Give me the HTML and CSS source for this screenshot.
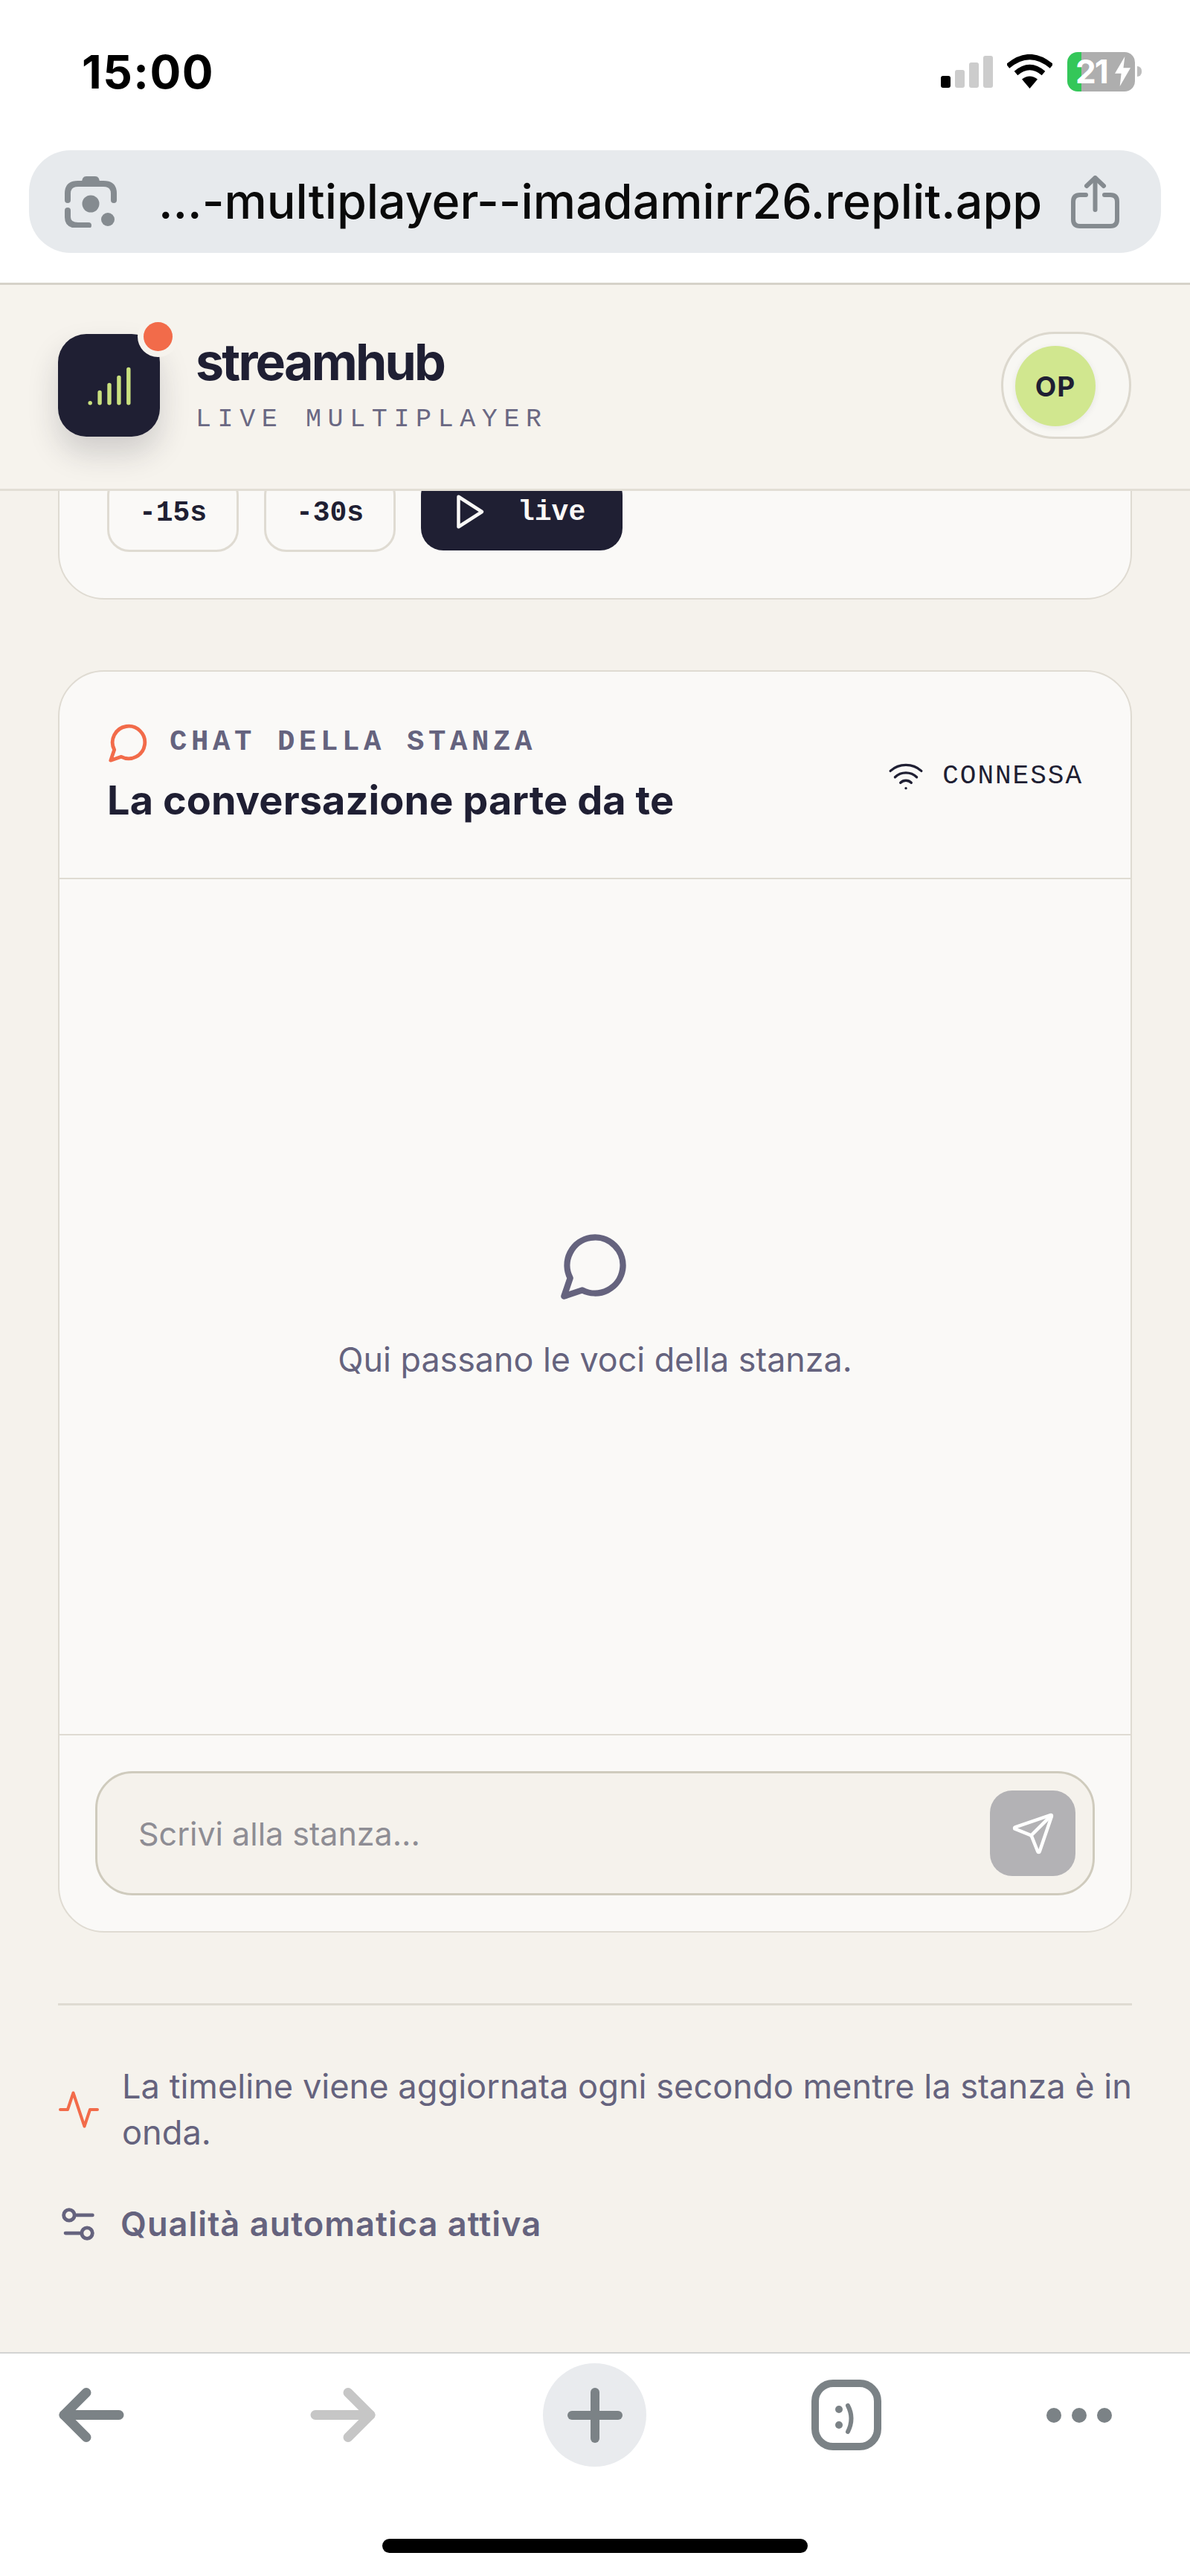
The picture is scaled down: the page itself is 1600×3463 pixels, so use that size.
FILE: index.html
```html
<!DOCTYPE html>
<html lang="it">
<head>
    <meta charset="UTF-8">
    <title>streamhub</title>
    <link rel="stylesheet" href="styles.css">
</head>
<body>
<div class="phone">

    <div class="status-bar">
        <span class="time">15:00</span>
        <div class="status-icons">
            <div class="signal">
                <i class="bar bar-1"></i>
                <i class="bar bar-2"></i>
                <i class="bar bar-3"></i>
                <i class="bar bar-4"></i>
            </div>
            <svg class="status-wifi" viewBox="0 0 61 46" fill="none" stroke="#000" stroke-width="7">
                <path d="M1 16 Q30.500 -9 60 16"/>
                <path d="M12 25.500 Q30.500 9.500 49 25.500"/>
                <path d="M30.500 46 L20 33.500 Q30.500 25.500 41 33.500 Z" fill="#000" stroke="none"/>
            </svg>
            <div class="battery">
                <span class="battery-num">21</span>
                <svg class="battery-bolt" viewBox="0 0 22 42" fill="#fff"><path d="M14 0 L0 24 H9 L7 42 L22 16 H12 Z"/></svg>
            </div>
            <i class="battery-nub"></i>
        </div>
    </div>

    <div class="url-bar">
        <svg class="lens-icon" viewBox="0 0 70 70" fill="none" stroke="#858b90" stroke-width="8" stroke-linecap="round">
            <path d="M4 33 V24 Q4 11 18 11 H52 Q66 11 66 24 V33"/>
            <path d="M23 10 Q23 1 29 1 H41 Q47 1 47 10 Z" fill="#858b90" stroke="none"/>
            <path d="M4 47 V56 Q4 67 18 67 H32"/>
            <circle cx="35" cy="38" r="11.500" fill="#858b90" stroke="none"/>
            <circle cx="58" cy="59" r="9" fill="#858b90" stroke="none"/>
        </svg>
        <span class="url-text">...-multiplayer--imadamirr26.replit.app</span>
        <svg class="share-icon" viewBox="0 0 65 71" fill="none" stroke="#858b90" stroke-width="6" stroke-linecap="round" stroke-linejoin="round">
            <path d="M20 26 H12 Q3 26 3 35 V59 Q3 68 12 68 H53 Q62 68 62 59 V35 Q62 26 53 26 H45"/>
            <path d="M32.500 46 V4"/>
            <path d="M21 14 L32.500 3 L44 14"/>
        </svg>
    </div>

    <header class="app-header">
        <div class="brand">
            <div class="logo">
                <svg class="logo-icon" viewBox="0 0 24 24" fill="none" stroke="#c9e07f" stroke-width="2.100" stroke-linecap="round">
                    <path d="M2 20h.01"/>
                    <path d="M7 20v-5.500"/>
                    <path d="M12 20v-9.400"/>
                    <path d="M17 20v-13.200"/>
                    <path d="M22 20v-17.500"/>
                </svg>
                <span class="logo-dot"></span>
            </div>
            <div class="brand-text">
                <div class="brand-name">streamhub</div>
                <div class="brand-sub">LIVE MULTIPLAYER</div>
            </div>
        </div>
        <div class="user-pill">
            <div class="avatar">OP</div>
        </div>
    </header>

    <main class="content">
        <section class="card player-card">
            <div class="seek-row">
                <button class="seek-btn">-15s</button>
                <button class="seek-btn">-30s</button>
                <button class="seek-btn live-btn">
                    <svg viewBox="0 0 24 24" fill="none" stroke="currentColor" stroke-width="2" stroke-linejoin="round"><path d="M6 3 L20 12 L6 21 Z"/></svg>
                    live
                </button>
            </div>
        </section>

        <section class="card chat-card">
            <div class="chat-head">
                <div>
                    <div class="chat-label">
                        <svg viewBox="0 0 24 24" fill="none" stroke="#f26b4a" stroke-width="2" stroke-linejoin="round"><path d="M7.900 20A9 9 0 1 0 4 16.100L2 22Z"/></svg>
                        CHAT DELLA STANZA
                    </div>
                    <h2 class="chat-title">La conversazione parte da te</h2>
                </div>
                <div class="chat-status">
                    <svg viewBox="0 0 24 24" fill="none" stroke="#1f1f33" stroke-width="1.600" stroke-linecap="round">
                        <path d="M12 20h.01"/>
                        <path d="M2 8.820a15 15 0 0 1 20 0"/>
                        <path d="M5 12.860a10 10 0 0 1 14 0"/>
                        <path d="M8.500 16.430a5 5 0 0 1 7 0"/>
                    </svg>
                    CONNESSA
                </div>
            </div>

            <div class="chat-body">
                <svg viewBox="0 0 24 24" fill="none" stroke="#65637e" stroke-width="2" stroke-linejoin="round"><path d="M7.900 20A9 9 0 1 0 4 16.100L2 22Z"/></svg>
                <p>Qui passano le voci della stanza.</p>
            </div>

            <div class="composer">
                <div class="composer-box">
                    <input type="text" placeholder="Scrivi alla stanza...">
                    <button class="send-btn">
                        <svg viewBox="0 0 24 24" fill="none" stroke="#fff" stroke-width="1.800" stroke-linejoin="round" stroke-linecap="round">
                            <path d="M14.536 21.686a.5.5 0 0 0 .937-.024l6.500-19a.496.496 0 0 0-.635-.635l-19 6.500a.5.5 0 0 0-.024.937l7.930 3.180a2 2 0 0 1 1.112 1.110z"/>
                            <path d="m21.854 2.147-10.940 10.939"/>
                        </svg>
                    </button>
                </div>
            </div>
        </section>

        <div class="notes">
            <div class="note">
                <svg class="pulse-icon" viewBox="0 0 24 24" fill="none" stroke="#f26b4a" stroke-width="1.600" stroke-linecap="round" stroke-linejoin="round"><path d="M22 12h-4l-3 9L9 3l-3 9H2"/></svg>
                <p>La timeline viene aggiornata ogni secondo mentre la stanza è in onda.</p>
            </div>
            <div class="note note-strong">
                <svg viewBox="0 0 24 24" fill="none" stroke="#65637e" stroke-width="2" stroke-linecap="round">
                    <path d="M20 7h-9"/>
                    <path d="M14 17H5"/>
                    <circle cx="17" cy="17" r="3"/>
                    <circle cx="7" cy="7" r="3"/>
                </svg>
                <p>Qualità automatica attiva</p>
            </div>
        </div>
    </main>

    <nav class="bottom-bar">
        <div class="bottom-icons">
            <svg class="nav-arrow" viewBox="0 0 88 73" fill="none" stroke="#7b8286" stroke-width="13" stroke-linecap="round" stroke-linejoin="round">
                <path d="M7 36.500 H81"/>
                <path d="M37 6.500 L7 36.500 L37 66.500"/>
            </svg>
            <svg class="nav-arrow nav-forward" viewBox="0 0 88 73" fill="none" stroke="#c6c6c6" stroke-width="13" stroke-linecap="round" stroke-linejoin="round">
                <path d="M81 36.500 H7"/>
                <path d="M51 6.500 L81 36.500 L51 66.500"/>
            </svg>
            <div class="plus-btn">
                <svg viewBox="0 0 74 74" fill="none" stroke="#7b8286" stroke-width="12" stroke-linecap="round">
                    <path d="M6 37 H68"/>
                    <path d="M37 6 V68"/>
                </svg>
            </div>
            <svg class="tabs-icon" viewBox="0 0 94 95" fill="none" stroke="#7b8286">
                <rect x="5" y="5" width="84" height="85" rx="24" stroke-width="10"/>
                <circle cx="37" cy="40" r="5" fill="#7b8286" stroke="none"/>
                <circle cx="37" cy="61" r="5" fill="#7b8286" stroke="none"/>
                <path d="M49 35 Q58 52 49 70" stroke-width="6" stroke-linecap="round"/>
            </svg>
            <div class="more-dots">
                <i></i><i></i><i></i>
            </div>
        </div>
        <div class="home-indicator"></div>
    </nav>

</div>
</body>
</html>
```

FILE: styles.css
```css
* {
    box-sizing: border-box;
}

body {
    margin: 0;
    font-family: Inter, "Liberation Sans", sans-serif;
    color: #1f1f33;
    background: #fff;
}

svg {
    display: block;
    flex: none;
}

.phone {
    width: 1600px;
    height: 3463px;
    display: flex;
    flex-direction: column;
    overflow: hidden;
}

/* ios status bar */
.status-bar {
    height: 192px;
    flex: none;
    display: flex;
    align-items: center;
    justify-content: space-between;
    padding: 0 65px 0 110px;
}

.time {
    font-size: 62px;
    font-weight: 700;
    color: #000;
    letter-spacing: 1.500px;
}

.status-icons {
    display: flex;
    align-items: center;
}

.signal {
    display: flex;
    align-items: flex-end;
    gap: 6px;
    height: 43px;
}

.bar {
    width: 13px;
    border-radius: 3px;
    background: #ccc;
}

.bar-1 { height: 16px; background: #000; }
.bar-2 { height: 24px; }
.bar-3 { height: 34px; }
.bar-4 { height: 43px; }

.status-wifi {
    width: 61px;
    height: 46px;
    margin-left: 19px;
}

.battery {
    width: 91px;
    height: 53px;
    margin-left: 20px;
    padding-left: 11px;
    border-radius: 14px;
    background: linear-gradient(90deg, #34c759 19px, #aeaeae 19px);
    display: flex;
    align-items: center;
    gap: 10px;
}

.battery-num {
    font-size: 44px;
    font-weight: 700;
    color: #fff;
    letter-spacing: -2px;
}

.battery-bolt {
    width: 21px;
    height: 42px;
}

.battery-nub {
    width: 6px;
    height: 14px;
    margin-left: 3px;
    border-radius: 0 7px 7px 0;
    background: #bdbdbd;
}

/* browser chrome */
.url-bar {
    flex: none;
    height: 138px;
    margin: 10px 39px 40px;
    padding: 0 56px 0 48px;
    border-radius: 56px;
    background: #e7eaed;
    display: flex;
    align-items: center;
}

.lens-icon {
    width: 70px;
    height: 70px;
}

.url-text {
    flex: 1;
    margin-left: 56px;
    font-size: 64.500px;
    font-weight: 500;
    color: #0a0a0a;
    white-space: nowrap;
}

.share-icon {
    width: 65px;
    height: 71px;
}

/* app header */
.app-header {
    flex: none;
    height: 280px;
    padding: 0 79px 4px 78px;
    border-top: 3px solid #d6d2c9;
    border-bottom: 3px solid #e2ded5;
    background: #f6f3ed;
    display: flex;
    align-items: center;
    justify-content: space-between;
}

.brand {
    display: flex;
    align-items: center;
    gap: 48px;
}

.logo {
    position: relative;
    width: 137px;
    height: 138px;
    border-radius: 38px;
    background: #1f1f33;
    box-shadow: 0 22px 40px rgba(31, 31, 51, 0.18);
    display: flex;
    align-items: center;
    justify-content: center;
}

.logo-icon {
    width: 62px;
    height: 62px;
    margin-top: 6px;
}

.logo-dot {
    position: absolute;
    top: -16px;
    right: -17px;
    width: 39px;
    height: 39px;
    border-radius: 50%;
    background: #f26b4a;
    box-shadow: 0 0 0 8px #f6f3ed;
}

.brand-text {
    padding-bottom: 4px;
}

.brand-name {
    font-size: 68px;
    font-weight: 700;
    line-height: 78px;
    letter-spacing: -2.800px;
}

.brand-sub {
    margin-top: 18px;
    font-family: "Liberation Mono", monospace;
    font-size: 35px;
    line-height: 42px;
    letter-spacing: 8.600px;
    color: #6a6883;
}

.user-pill {
    width: 175px;
    height: 144px;
    padding: 16px;
    border: 3px solid #dcd8ce;
    border-radius: 72px;
    background: #f8f7f3;
}

.avatar {
    width: 108px;
    height: 108px;
    border-radius: 50%;
    background: #d1e78f;
    box-shadow: 0 2px 8px rgba(31, 31, 51, 0.08);
    display: flex;
    align-items: center;
    justify-content: center;
    font-size: 37px;
    font-weight: 700;
    letter-spacing: 1px;
}

/* scrolling page, pinned to the bottom so the first card runs under the header */
.content {
    flex: 1;
    min-height: 0;
    overflow: hidden;
    background: #f5f2ec;
    padding: 0 78px 141px;
    display: flex;
    flex-direction: column;
    justify-content: flex-end;
}

.card {
    flex: none;
    border: 2.500px solid #dfdbd2;
    border-radius: 62px;
    background: #faf9f7;
}

.player-card {
    padding: 40px 64px 62px;
    margin-bottom: 95px;
}

.seek-row {
    display: flex;
    align-items: flex-end;
    gap: 34px;
}

.seek-btn {
    width: 177px;
    height: 106px;
    border: 3px solid #dfdbd2;
    border-radius: 30px;
    background: #faf9f7;
    color: #1f1f33;
    font-family: "Liberation Mono", monospace;
    font-size: 38px;
    font-weight: 700;
    padding: 0;
}

.live-btn {
    width: 271px;
    height: 104px;
    margin-bottom: 2px;
    padding-left: 37px;
    border: none;
    background: #1f1f33;
    color: #faf9f7;
    display: flex;
    align-items: center;
    gap: 39px;
}

.live-btn svg {
    width: 54px;
    height: 54px;
}

.chat-head {
    padding: 66px 64px 71px;
    border-bottom: 2.500px solid #dfdbd2;
    display: flex;
    align-items: center;
    justify-content: space-between;
}

.chat-label {
    display: flex;
    align-items: center;
    gap: 26px;
    height: 58px;
    font-family: "Liberation Mono", monospace;
    font-size: 39px;
    font-weight: 700;
    letter-spacing: 5.600px;
    color: #65637e;
}

.chat-label svg {
    width: 58px;
    height: 58px;
}

.chat-title {
    margin: 16px 0 0;
    font-size: 54px;
    font-weight: 700;
    line-height: 66px;
    letter-spacing: 0.100px;
}

.chat-status {
    margin-top: 8px;
    display: flex;
    align-items: center;
    gap: 24px;
    font-family: "Liberation Mono", monospace;
    font-size: 36px;
    letter-spacing: 2px;
}

.chat-status svg {
    width: 50px;
    height: 50px;
}

.chat-body {
    height: 1151px;
    padding-bottom: 4px;
    border-bottom: 2.500px solid #dfdbd2;
    display: flex;
    flex-direction: column;
    align-items: center;
    justify-content: center;
    gap: 46px;
    color: #65637e;
}

.chat-body svg {
    width: 100px;
    height: 100px;
}

.chat-body p {
    margin: 0;
    font-size: 44.800px;
    line-height: 62px;
}

.composer {
    padding: 48px;
}

.composer-box {
    height: 167px;
    padding: 0 23px 0 55px;
    border: 3px solid #cfcbbd;
    border-radius: 50px;
    background: #f5f2ec;
    display: flex;
    align-items: center;
}

.composer-box input {
    flex: 1;
    min-width: 0;
    border: none;
    outline: none;
    padding: 0;
    background: none;
    font-family: Inter, "Liberation Sans", sans-serif;
    font-size: 43px;
    color: #1f1f33;
}

.composer-box input::placeholder {
    color: #8e8d94;
    opacity: 1;
}

.send-btn {
    width: 115px;
    height: 115px;
    flex: none;
    border: none;
    border-radius: 30px;
    padding: 0;
    background: #b3b2b5;
    display: flex;
    align-items: center;
    justify-content: center;
}

.send-btn svg {
    width: 60px;
    height: 60px;
}

.notes {
    flex: none;
    margin-top: 95px;
    padding-top: 78px;
    border-top: 3px solid #dfdbd2;
    display: flex;
    flex-direction: column;
    gap: 61px;
    color: #65637e;
}

.note {
    display: flex;
    align-items: center;
    gap: 28px;
}

.note svg {
    width: 58px;
    height: 58px;
    margin: 0 2px 0 -2px;
}

.note .pulse-icon {
    width: 60px;
    height: 60px;
    margin: 0 0 0 -2px;
}

.note p {
    margin: 0;
    font-size: 45.200px;
    line-height: 62px;
}

.note-strong p {
    margin-left: -2px;
    font-weight: 600;
    letter-spacing: 1px;
}

/* browser bottom toolbar */
.bottom-bar {
    flex: none;
    height: 301px;
    border-top: 2px solid #d3d4d3;
    background: #fff;
    padding-top: 13px;
}

.bottom-icons {
    display: flex;
    align-items: center;
    gap: 222px;
    padding-left: 79px;
}

.nav-arrow {
    width: 88px;
    height: 73px;
}

.nav-forward {
    margin-left: 28px;
}

.plus-btn {
    width: 139px;
    height: 139px;
    margin-left: 3px;
    border-radius: 50%;
    background: #e9ebee;
    display: flex;
    align-items: center;
    justify-content: center;
}

.plus-btn svg {
    width: 74px;
    height: 74px;
}

.tabs-icon {
    width: 94px;
    height: 95px;
}

.more-dots {
    display: flex;
    gap: 14px;
}

.more-dots i {
    width: 20px;
    height: 20px;
    border-radius: 50%;
    background: #7b8286;
}

.home-indicator {
    width: 572px;
    height: 19px;
    margin: 97px auto 0;
    border-radius: 10px;
    background: #000;
}
```
